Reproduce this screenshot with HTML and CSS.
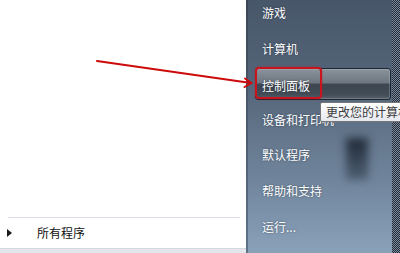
FILE: index.html
```html
<!DOCTYPE html>
<html lang="zh-CN">
<head>
<meta charset="utf-8">
<title>开始菜单</title>
<link rel="stylesheet" href="styles.css">
</head>
<body>
<div class="screen">
  <div class="left">
    <div class="spacer"></div>
    <div class="sep"></div>
    <div class="allprog"><span class="tri"></span><span class="label">所有程序</span></div>
    <div class="band"></div>
  </div>
  <div class="divider"></div>
  <div class="right">
    <ul class="menu">
      <li class="item">游戏</li>
      <li class="item">计算机</li>
      <li class="item active">控制面板</li>
      <li class="item">设备和打印机</li>
      <li class="item">默认程序</li>
      <li class="item">帮助和支持</li>
      <li class="item">运行...</li>
    </ul>
  </div>
  <div class="dither"></div>

  <div class="blob"></div>
  <div class="tooltip"><span class="tiptext">更改您的计算机设置并自定义其功能。</span></div>
  <div class="redbox"></div>
  <svg class="arrow" width="400" height="253" viewBox="0 0 400 253">
    <path d="M97 61 L251 83" fill="none" stroke="#cc0a0a" stroke-width="2.2" stroke-linecap="round"/>
    <path d="M245 78.5 L251.5 83 L244.5 87" fill="none" stroke="#cc0a0a" stroke-width="2" stroke-linecap="round" stroke-linejoin="round"/>
  </svg>
</div>
</body>
</html>
```

FILE: styles.css
```css
html, body {
  margin: 0;
  padding: 0;
}
body {
  width: 400px;
  height: 253px;
  overflow: hidden;
  background: #ffffff;
  font-family: "Noto Sans CJK SC", "Noto Sans", sans-serif;
  font-size: 12px;
}
.screen {
  position: relative;
  display: flex;
  width: 400px;
  height: 253px;
  overflow: hidden;
}
.left {
  width: 246px;
  display: flex;
  flex-direction: column;
  background: #ffffff;
}
.spacer {
  flex: 1;
}
.sep {
  height: 1px;
  margin: 0 6px 0 8px;
  background: #d9dee4;
}
.allprog {
  height: 30px;
  display: flex;
  align-items: center;
  color: #111111;
}
.tri {
  width: 0;
  height: 0;
  margin-left: 7px;
  border-top: 4px solid transparent;
  border-bottom: 4px solid transparent;
  border-left: 5px solid #1a1a1a;
}
.label {
  margin-left: 25px;
  line-height: 14px;
}
.band {
  height: 4px;
  background: #e3e7ec;
  border-top: 1px solid #d3d8de;
}
.divider {
  width: 2px;
  background: linear-gradient(#3a4655, #5f7288);
}
.right {
  width: 144px;
  background: linear-gradient(#475669 0%, #56667a 35%, #6f849b 70%, #8aa1ba 100%);
}
.dither {
  width: 8px;
  background-color: #4a596c;
  background-image: repeating-conic-gradient(#222b36 0 25%, #7a899b 0 50%);
  background-size: 2px 2px;
}
.menu {
  list-style: none;
  margin: -3px 0 0 0;
  padding: 0;
  display: flex;
  flex-direction: column;
  gap: 3.6px;
}
.item {
  height: 32px;
  box-sizing: border-box;
  display: flex;
  align-items: center;
  padding-left: 14px;
  color: #ffffff;
  line-height: 14px;
  text-shadow: 0 0 2px rgba(20, 30, 45, 0.6);
}
.item.active {
  margin-left: 7px;
  width: 136px;
  padding-left: 6px;
  padding-top: 3px;
  border: 1px solid #1e2731;
  border-radius: 3px;
  background: linear-gradient(#8a939c 0%, #6f7881 45%, #3c4651 52%, #434d58 85%, #55606b 100%);
  box-shadow: inset 0 0 0 1px rgba(200, 210, 220, 0.25);
}
.blob {
  position: absolute;
  left: 346px;
  top: 138px;
  width: 22px;
  height: 42px;
  background: linear-gradient(#1f2935 0%, #2e3a49 30%, rgba(60, 74, 92, 0.6) 100%);
  filter: blur(4px);
}
.tooltip {
  position: absolute;
  left: 320px;
  top: 102px;
  width: 140px;
  height: 20px;
  box-sizing: border-box;
  padding-left: 5px;
  display: flex;
  align-items: center;
  overflow: hidden;
  white-space: nowrap;
  color: #3c3c3c;
  background: linear-gradient(#ffffff, #e6e8f0);
  border: 1px solid #767676;
  border-radius: 2px;
  line-height: 14px;
}
.redbox {
  position: absolute;
  left: 255px;
  top: 67px;
  width: 67px;
  height: 32px;
  box-sizing: border-box;
  border: 2px solid #c8141c;
  border-radius: 4px;
  box-shadow: 0 0 2px rgba(200, 20, 28, 0.6);
}
.arrow {
  position: absolute;
  left: 0;
  top: 0;
  pointer-events: none;
}
```
